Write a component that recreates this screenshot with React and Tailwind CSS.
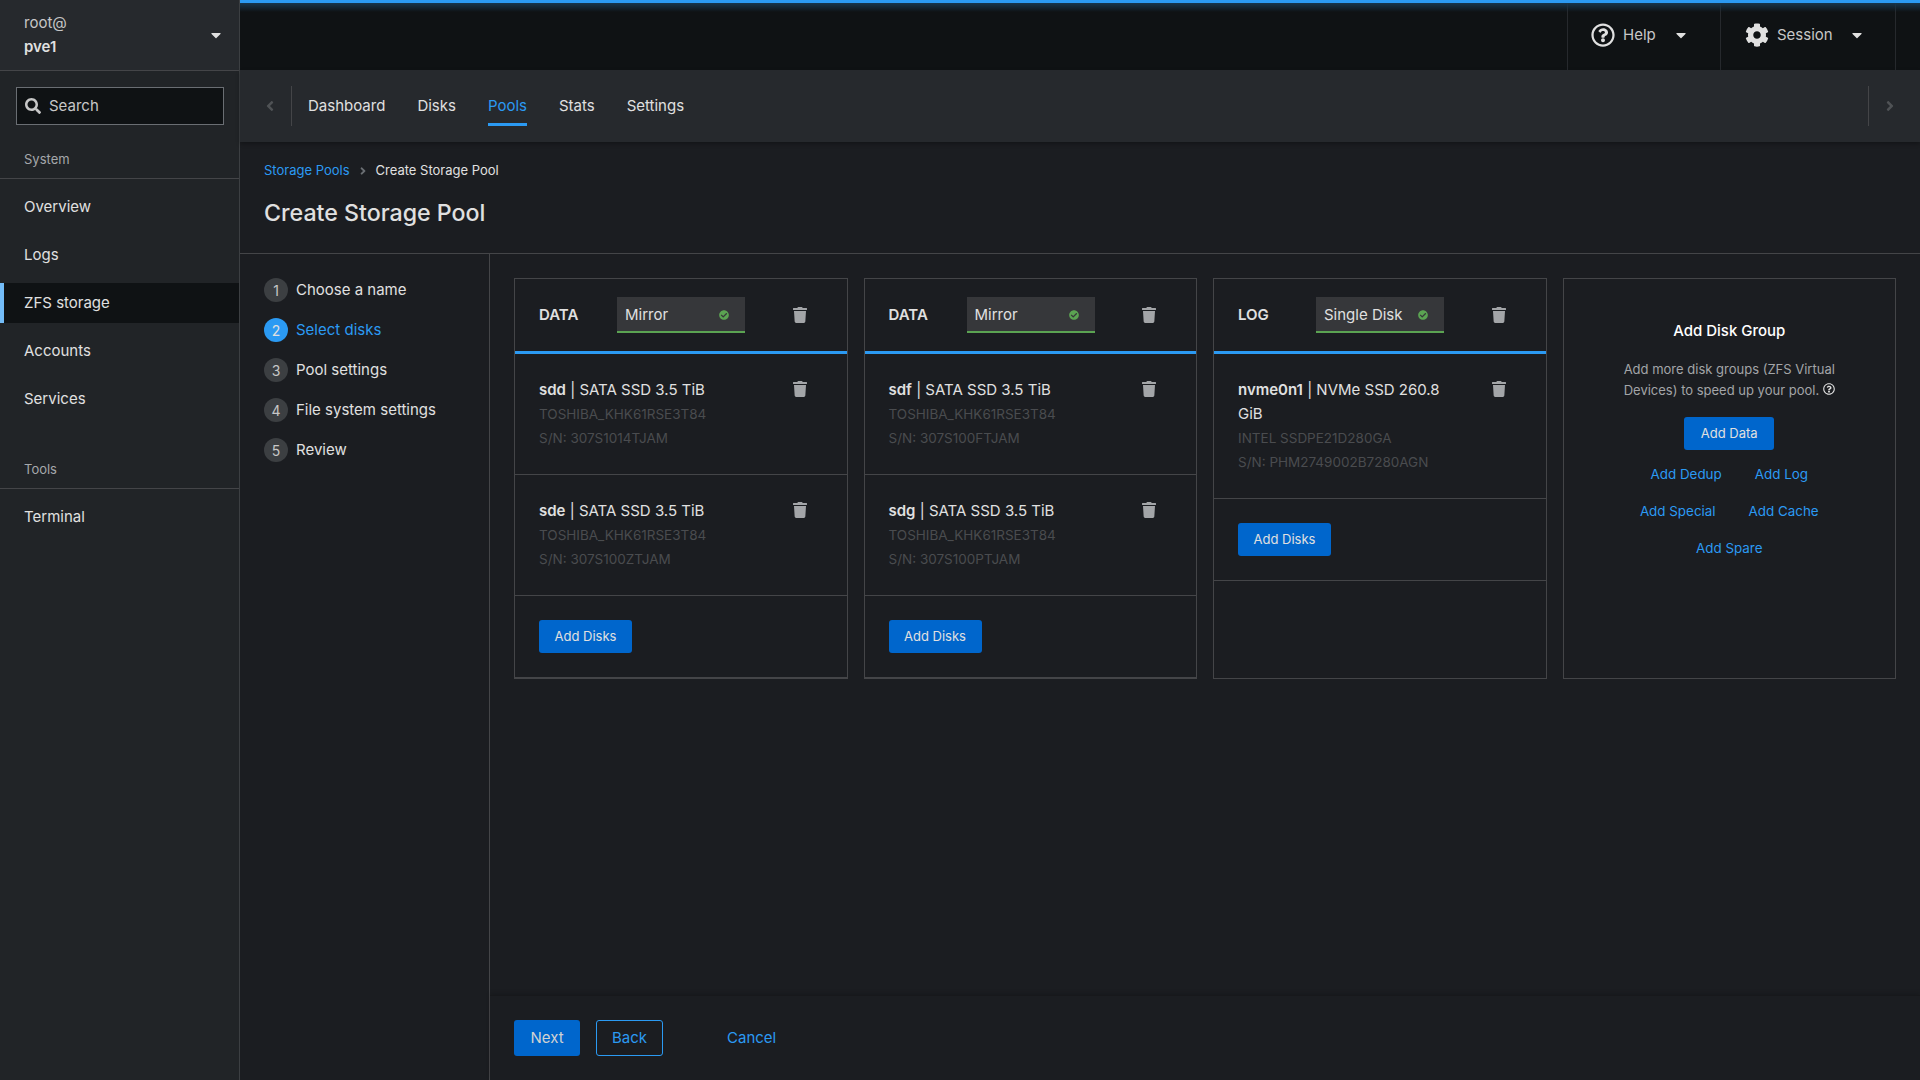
import React from "react";
import {
    FaCaretDown,
    FaSearch,
    FaAngleLeft,
    FaAngleRight,
    FaRegQuestionCircle,
    FaCog,
    FaTrash,
    FaCheckCircle,
} from "react-icons/fa";

const systemItems = ["Overview", "Logs", "ZFS storage", "Accounts", "Services"];
const tabs = ["Dashboard", "Disks", "Pools", "Stats", "Settings"];
const steps = ["Choose a name", "Select disks", "Pool settings", "File system settings", "Review"];

const groups = [
    {
        type: "DATA",
        mode: "Mirror",
        disks: [
            { name: "sdd", info: " | SATA SSD 3.5 TiB", model: "TOSHIBA_KHK61RSE3T84", serial: "S/N: 307S1014TJAM" },
            { name: "sde", info: " | SATA SSD 3.5 TiB", model: "TOSHIBA_KHK61RSE3T84", serial: "S/N: 307S100ZTJAM" },
        ],
    },
    {
        type: "DATA",
        mode: "Mirror",
        disks: [
            { name: "sdf", info: " | SATA SSD 3.5 TiB", model: "TOSHIBA_KHK61RSE3T84", serial: "S/N: 307S100FTJAM" },
            { name: "sdg", info: " | SATA SSD 3.5 TiB", model: "TOSHIBA_KHK61RSE3T84", serial: "S/N: 307S100PTJAM" },
        ],
    },
    {
        type: "LOG",
        mode: "Single Disk",
        disks: [
            { name: "nvme0n1", info: " | NVMe SSD 260.8 GiB", model: "INTEL SSDPE21D280GA", serial: "S/N: PHM2749002B7280AGN" },
        ],
    },
];

const LinkButton = ({ children }) => (
    <button className="px-[16.5px] py-2 text-[13.4px] leading-[21px] text-[#2b9af3]">{children}</button>
);

const Sidebar = () => (
    <aside className="w-[240px] shrink-0 flex flex-col bg-[#212427] border-r border-[#3c3f42]">
        <div className="h-[71px] shrink-0 flex items-center justify-between pl-6 pr-[15px] bg-[#26292d] border-b border-[#444548]">
            <div className="text-[15px] leading-6 text-[#c7c7c7]">
                <div>root@</div>
                <div className="font-semibold text-[#e0e0e0]">pve1</div>
            </div>
            <FaCaretDown className="text-[#e0e0e0] w-4 h-4" />
        </div>
        <div className="pl-4 pr-[15px] pt-4">
            <div className="h-[38px] flex items-center gap-2 pl-2 bg-[#0f1214] border border-[#6a6e73]">
                <FaSearch className="text-[#c7c7c7] w-4 h-4" />
                <span className="text-[15px] text-[#c7c7c7]">Search</span>
            </div>
        </div>
        <div className="pl-6 pt-[24px] pb-2 text-[13px] leading-[21px] text-[#a5a8ab] border-b border-[#444548]">
            System
        </div>
        <nav className="flex flex-col gap-2 pt-2">
            {systemItems.map((item) => (
                <div
                    key={item}
                    className={
                        item === "ZFS storage"
                            ? "h-10 flex items-center pl-5 border-l-4 border-[#73bcf7] bg-[#0f1214] text-[15px] text-[#e0e0e0]"
                            : "h-10 flex items-center pl-6 text-[15px] text-[#e0e0e0]"
                    }
                >
                    {item}
                </div>
            ))}
        </nav>
        <div className="pl-6 pt-10 pb-2 text-[13px] leading-[21px] text-[#a5a8ab] border-b border-[#444548]">
            Tools
        </div>
        <div className="h-10 mt-2 flex items-center pl-6 text-[15px] text-[#e0e0e0]">Terminal</div>
    </aside>
);

const TopBar = () => (
    <header className="relative h-[70px] shrink-0 flex justify-end bg-[#0f1214] pr-[24px]">
        <div className="absolute inset-x-0 top-0 h-[3px] bg-[#2b9af3]" />
        <div className="absolute inset-x-0 top-[3px] h-[9px] bg-linear-to-b from-[#17364d] to-transparent" />
        <div className="w-[153px] flex items-center pl-[23px] border-l border-[#26292d] text-[#e0e0e0]">
            <FaRegQuestionCircle className="w-6 h-6 shrink-0" />
            <span className="ml-2 text-[15px] text-[#c7c7c7]">Help</span>
            <FaCaretDown className="ml-[17px] w-4 h-4" />
        </div>
        <div className="w-[176px] flex items-center pl-[24px] border-x border-[#26292d] text-[#e0e0e0]">
            <FaCog className="w-6 h-6 shrink-0" />
            <span className="ml-2 text-[15px] text-[#c7c7c7]">Session</span>
            <FaCaretDown className="ml-[16px] w-4 h-4" />
        </div>
    </header>
);

const TabBar = () => (
    <div className="h-[72px] shrink-0 flex items-center bg-[#26292d] shadow-[0_2px_4px_rgba(0,0,0,0.3)] z-10">
        <div className="w-[52px] h-10 flex items-center justify-end pr-[13px] border-r border-[#444548]">
            <FaAngleLeft className="w-4 h-4 text-[#4f5255]" />
        </div>
        <div className="flex-1 flex h-10">
            {tabs.map((tab) => (
                <div key={tab} className="px-4 h-10 flex items-center">
                    <span
                        className={
                            tab === "Pools"
                                ? "h-10 flex items-center text-[15px] text-[#2b9af3] border-b-[3px] border-[#2b9af3] pt-[3px]"
                                : "h-10 flex items-center text-[15px] text-[#e0e0e0]"
                        }
                    >
                        {tab}
                    </span>
                </div>
            ))}
        </div>
        <div className="w-[52px] h-10 flex items-center justify-start pl-[13px] border-l border-[#444548]">
            <FaAngleRight className="w-4 h-4 text-[#4f5255]" />
        </div>
    </div>
);

const PageHead = () => (
    <div className="h-[112px] shrink-0 px-6 pt-[19px] border-b border-[#444548]">
        <div className="flex items-center h-5 text-[13px] text-[#e0e0e0]">
            <span className="text-[#2b9af3]">Storage Pools</span>
            <FaAngleRight className="mx-[7px] w-3 h-3 text-[#6a6e73]" />
            <span>Create Storage Pool</span>
        </div>
        <h1 className="mt-[14px] text-[23.2px] leading-[36px] font-medium text-[#e0e0e0]">Create Storage Pool</h1>
    </div>
);

const StepList = () => (
    <ol className="w-[250px] shrink-0 pl-6 pt-6 flex flex-col gap-4 border-r border-[#444548]">
        {steps.map((step, i) => (
            <li key={step} className="flex items-center gap-2 h-6">
                <span
                    className={
                        i === 1
                            ? "w-6 h-6 rounded-full flex items-center justify-center text-[14px] bg-[#2b9af3] text-[#e0e0e0]"
                            : "w-6 h-6 rounded-full flex items-center justify-center text-[14px] bg-[#3c3f42] text-[#c7c7c7]"
                    }
                >
                    {i + 1}
                </span>
                <span className={i === 1 ? "text-[15px] text-[#2b9af3]" : "text-[15px] text-[#e0e0e0]"}>{step}</span>
            </li>
        ))}
    </ol>
);

const GroupCard = ({ group }) => (
    <div className="border border-[#444548] flex flex-col">
        <div className="h-[72px] shrink-0 flex items-center pl-6 pr-10">
            <span className="w-[78px] font-semibold text-[15px] text-[#e0e0e0]">{group.type}</span>
            <div className="w-[128px] h-9 flex items-center justify-between pl-2 pr-4 pt-[2px] bg-[#36373a] border-b-2 border-[#5ba352]">
                <span className="text-[15px] text-[#e0e0e0]">{group.mode}</span>
                <FaCheckCircle className="w-[10px] h-[10px] text-[#5ba352]" />
            </div>
            <FaTrash className="ml-auto w-[14px] h-4 text-[#a3a5a8]" />
        </div>
        <div className="h-[3px] shrink-0 bg-[#2b9af3]" />
        {group.disks.map((disk) => (
            <div key={disk.name} className="flex pl-6 pr-10 py-6 border-b border-[#444548]">
                <div className="w-[210px] text-[15px] leading-6">
                    <div className="text-[#e0e0e0]">
                        <span className="font-semibold">{disk.name}</span>
                        {disk.info}
                    </div>
                    <div className="text-[13.5px] text-[#4a4c4f]">{disk.model}</div>
                    <div className="text-[13.5px] text-[#4a4c4f]">{disk.serial}</div>
                </div>
                <FaTrash className="ml-auto mt-[3px] w-[14px] h-4 text-[#a3a5a8]" />
            </div>
        ))}
        <div className="p-6 border-b border-[#444548]">
            <button className="h-[33px] w-[93px] rounded-[3px] bg-[#0066cc] text-[13px] text-[#e0e0e0]">Add Disks</button>
        </div>
    </div>
);

const AddGroupCard = () => (
    <div className="border border-[#444548] flex flex-col items-center pt-10">
        <h3 className="text-[15px] leading-6 font-medium text-white">Add Disk Group</h3>
        <p className="mt-4 w-[240px] text-center text-[13px] leading-[21px] text-[#a3a5a8]">
            Add more disk groups (ZFS Virtual Devices) to speed up your pool.{" "}
            <FaRegQuestionCircle className="inline w-3 h-3 align-baseline text-[#e0e0e0]" />
        </p>
        <button className="mt-4 h-[33px] w-[90px] rounded-[3px] bg-[#0066cc] text-[13px] text-[#e0e0e0]">Add Data</button>
        <div className="mt-[6px] flex">
            <LinkButton>Add Dedup</LinkButton>
            <LinkButton>Add Log</LinkButton>
        </div>
        <div className="flex">
            <LinkButton>Add Special</LinkButton>
            <LinkButton>Add Cache</LinkButton>
        </div>
        <div className="flex">
            <LinkButton>Add Spare</LinkButton>
        </div>
    </div>
);

const Footer = () => (
    <div className="h-[85px] shrink-0 flex items-center pl-6 border-t border-[#17181b] shadow-[0_-2px_4px_rgba(0,0,0,0.15)]">
        <button className="h-9 w-[66px] rounded-[3px] bg-[#0066cc] text-[15px] text-[#d2d2d2]">Next</button>
        <button className="ml-4 h-9 w-[67px] rounded-[3px] border border-[#2b9af3] text-[15px] text-[#2b9af3]">Back</button>
        <button className="ml-12 px-4 h-9 text-[15px] text-[#2b9af3]">Cancel</button>
    </div>
);

export default function App() {
    return (
        <div className="h-screen w-full flex bg-[#1b1d21] overflow-hidden [font-family:Inter,sans-serif]">
            <Sidebar />
            <main className="flex-1 min-w-0 flex flex-col">
                <TopBar />
                <TabBar />
                <PageHead />
                <div className="flex-1 min-h-0 flex">
                    <StepList />
                    <div className="flex-1 min-w-0 flex flex-col">
                        <div className="flex-1 min-h-0 px-6 pt-6">
                            <div className="grid grid-cols-4 gap-4 h-[400px]">
                                {groups.map((group, i) => (
                                    <GroupCard key={i} group={group} />
                                ))}
                                <AddGroupCard />
                            </div>
                        </div>
                        <Footer />
                    </div>
                </div>
            </main>
        </div>
    );
}
